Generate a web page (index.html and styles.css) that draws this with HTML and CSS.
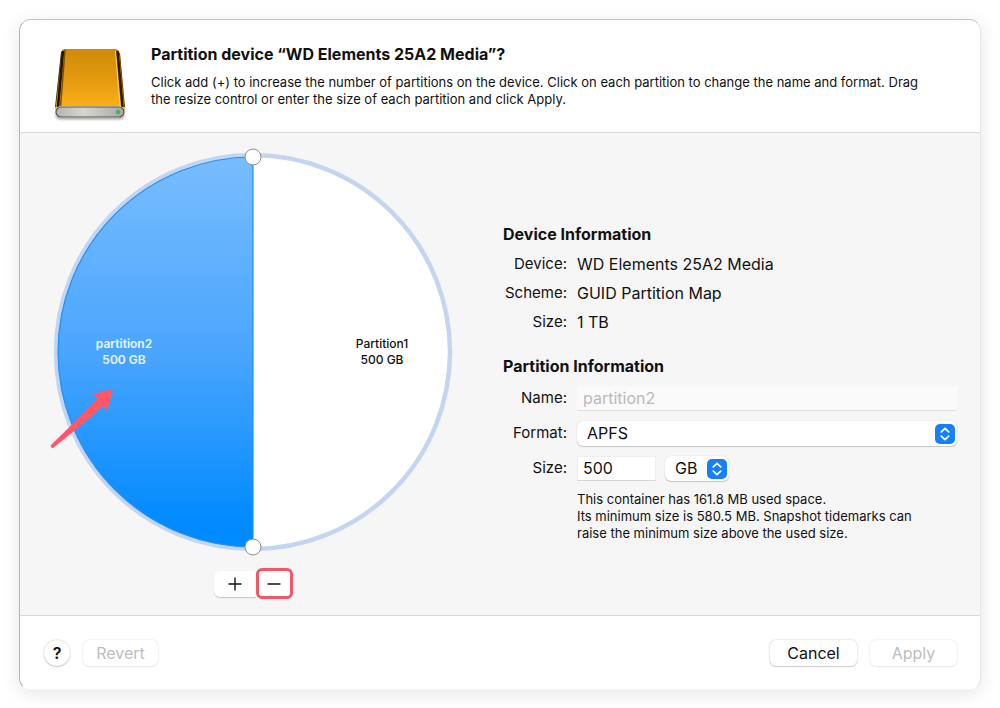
FILE: index.html
```html
<!DOCTYPE html>
<html lang="en">
<head>
<meta charset="utf-8">
<title>Partition device</title>
<link rel="stylesheet" href="styles.css">
</head>
<body>
<main class="dialog">
  <header class="header">
    <svg class="drive" viewBox="0 0 80 80" aria-hidden="true">
      <defs>
        <linearGradient id="case" x1="0" x2="0" y1="0" y2="1">
          <stop offset="0" stop-color="#cf8a08"/>
          <stop offset="0.5" stop-color="#e49a0e"/>
          <stop offset="1" stop-color="#fbb31a"/>
        </linearGradient>
        <linearGradient id="front" x1="0" x2="1" y1="0" y2="0">
          <stop offset="0" stop-color="#b5b3ae"/>
          <stop offset="0.4" stop-color="#d8d6d2"/>
          <stop offset="1" stop-color="#aaa8a4"/>
        </linearGradient>
        <filter id="soft" x="-20%" y="-100%" width="140%" height="300%"><feGaussianBlur stdDeviation="1.5"/></filter>
      </defs>
      <rect x="6" y="67" width="68" height="8" rx="4" fill="#000" opacity="0.45" filter="url(#soft)"/>
      <path d="M15 5h50q4 0 5 5l5 56H5l6-56q0-5 4-5z" fill="url(#case)"/>
      <path d="M11.500 8L5.500 63" stroke="#5c3b04" stroke-width="1" fill="none"/>
      <path d="M13 7L8 63" stroke="#211501" stroke-width="2.600" fill="none"/>
      <path d="M15 5.500L10.500 63" stroke="#7d4f04" stroke-width="1.500" fill="none"/>
      <path d="M65.500 7L70 63" stroke="#ffd257" stroke-width="1" fill="none"/>
      <path d="M67.500 7L72.500 63" stroke="#2a1a01" stroke-width="2.600" fill="none"/>
      <path d="M69.500 9L74.500 63" stroke="#6f4805" stroke-width="1" fill="none"/>
      <rect x="5" y="62" width="70" height="12" rx="6" fill="#efe6d2"/>
      <rect x="6" y="63" width="68" height="10" rx="5" fill="url(#front)" stroke="#55534f" stroke-width="1.2"/>
      <circle cx="68" cy="68" r="2.2" fill="#43b649"/>
    </svg>
    <div class="intro">
      <h1 class="title">Partition device “WD Elements 25A2 Media”?</h1>
      <p class="description">Click add (+) to increase the number of partitions on the device. Click on each partition to change the name and format. Drag the resize control or enter the size of each partition and click Apply.</p>
    </div>
  </header>

  <section class="content">
    <div class="map">
      <svg class="pie" viewBox="0 0 400 414" role="group" aria-label="Partition map">
        <defs>
          <linearGradient id="slice" x1="0" x2="0" y1="0" y2="1">
            <stop offset="0" stop-color="#78bdfd"/>
            <stop offset="0.5" stop-color="#4ba5fd"/>
            <stop offset="0.93" stop-color="#028bff"/>
            <stop offset="1" stop-color="#008aff"/>
          </linearGradient>
        </defs>
        <circle cx="200" cy="207" r="197" fill="#fff" stroke="#c4d5f1" stroke-width="4.5"/>
        <path d="M200 12a195 195 0 0 0 0 390z" fill="url(#slice)" stroke="#208ffb" stroke-width="1.2"/>
        <text class="pie-label pie-label-selected" x="71" y="203">partition2</text>
        <text class="pie-label pie-label-selected" x="71" y="219">500 GB</text>
        <text class="pie-label" x="329" y="203">Partition1</text>
        <text class="pie-label" x="329" y="219">500 GB</text>
        <g class="handles">
          <circle cx="200" cy="12" r="8"/>
          <circle cx="200" cy="402" r="8"/>
        </g>
        <path class="arrow" d="M60 244L39 249L45 253Q24 275-2 300Q-3 303 0 303Q28 281 50 261L54 266Z"/>
      </svg>
      <div class="segmented">
        <button class="segment" type="button" aria-label="Add partition">
          <svg class="glyph" viewBox="0 0 14 14"><path d="M1 7h12M7 1v12"/></svg>
        </button>
        <button class="segment segment-marked" type="button" aria-label="Remove partition">
          <svg class="glyph" viewBox="0 0 14 14"><path d="M1 7h12"/></svg>
        </button>
      </div>
    </div>

    <form class="info">
      <h2 class="heading">Device Information</h2>
      <dl class="facts">
        <dt>Device:</dt><dd>WD Elements 25A2 Media</dd>
        <dt>Scheme:</dt><dd>GUID Partition Map</dd>
        <dt>Size:</dt><dd>1 TB</dd>
      </dl>
      <h2 class="heading">Partition Information</h2>
      <div class="fields">
        <label for="name">Name:</label>
        <input class="field" id="name" type="text" value="partition2" disabled>
        <label for="format">Format:</label>
        <div class="popup">
          <select class="select" id="format"><option>APFS</option></select>
          <svg class="stepper" viewBox="0 0 20 20" aria-hidden="true"><rect width="20" height="20" rx="5"/><path d="M6.300 7.800L10 4.300l3.700 3.500M6.300 12.200L10 15.700l3.700-3.500"/></svg>
        </div>
        <label for="size">Size:</label>
        <div class="size-row">
          <input class="field field-size" id="size" type="text" value="500">
          <div class="popup popup-unit">
            <select class="select" aria-label="Size unit"><option>GB</option></select>
            <svg class="stepper" viewBox="0 0 20 20" aria-hidden="true"><rect width="20" height="20" rx="5"/><path d="M6.300 7.800L10 4.300l3.700 3.500M6.300 12.200L10 15.700l3.700-3.500"/></svg>
          </div>
        </div>
        <p class="note">This container has 161.8 MB used space.<br>Its minimum size is 580.5 MB. Snapshot tidemarks can raise the minimum size above the used size.</p>
      </div>
    </form>
  </section>

  <footer class="footer">
    <button class="help" type="button" aria-label="Help">?</button>
    <button class="button button-revert" type="button" disabled>Revert</button>
    <span class="spacer"></span>
    <button class="button" type="button">Cancel</button>
    <button class="button" type="button" disabled>Apply</button>
  </footer>
</main>
</body>
</html>
```

FILE: styles.css
```css
* {
  box-sizing: border-box;
}

body {
  margin: 0;
  padding: 19px;
  background: #fff;
  color: #111;
  font-family: Inter, "Liberation Sans", sans-serif;
  font-size: 16px;
  line-height: 20px;
}

h1, h2, p, dl, dd {
  margin: 0;
}

button, input, select {
  margin: 0;
  font: inherit;
  color: inherit;
}

.dialog {
  overflow: hidden;
  border: 1px solid #e6e6e6;
  border-top-color: #c4c4c4;
  border-left-color: #b4b4bc;
  border-bottom-color: #f4f4f4;
  border-radius: 12px;
  background: #fff;
  box-shadow: 0 4px 18px rgba(0, 0, 0, 0.1);
}

.header {
  display: flex;
  gap: 21px;
  padding: 24px 26px 8px 30px;
  border-bottom: 1px solid #d9d9d9;
}

.drive {
  flex: none;
  width: 80px;
  height: 80px;
}

.title {
  font-size: 16px;
  font-weight: 700;
  line-height: 20px;
}

.description {
  max-width: 780px;
  margin-top: 10px;
  font-size: 13px;
  line-height: 17px;
}

.content {
  display: flex;
  align-items: center;
  gap: 50px;
  padding: 12px 23px 16px 33px;
  background: #f6f6f6;
}

.map {
  display: flex;
  flex: 0 1 400px;
  flex-direction: column;
  align-items: center;
  gap: 9px;
}

.pie {
  display: block;
  width: 100%;
  overflow: visible;
}

.pie-label {
  font-size: 12px;
  font-weight: 500;
  text-anchor: middle;
  fill: #111;
}

.pie-label-selected {
  font-weight: 600;
  fill: #e9f6ff;
}

.handles {
  fill: #fff;
  stroke: #8d8d8d;
  stroke-width: 1;
}

.arrow {
  fill: #fd5768;
}

.segmented {
  display: flex;
  align-items: center;
}

.segment {
  display: grid;
  place-items: center;
  width: 42px;
  height: 26px;
  padding: 0;
  border: 0;
  border-radius: 6px 0 0 6px;
  background: #fff;
  box-shadow: 0 1px 1px rgba(0, 0, 0, 0.2);
}

.segment-marked {
  width: 37px;
  height: 31px;
  border: 3px solid #f65467;
  border-radius: 6px;
  box-shadow: none;
}

.glyph {
  width: 14px;
  height: 14px;
  fill: none;
  stroke: #111;
  stroke-width: 1.4;
  stroke-linecap: round;
}

.info {
  flex: 1;
  min-width: 0;
  margin-top: 21px;
}

.heading {
  font-size: 16px;
  font-weight: 700;
  line-height: 20px;
}

.facts, .fields {
  display: grid;
  grid-template-columns: 64px 1fr;
  column-gap: 10px;
  align-items: center;
}

.facts {
  row-gap: 9px;
  margin: 10px 0 24px;
}

.facts dt, .fields label {
  font-size: 15px;
  text-align: right;
}

.fields {
  row-gap: 10px;
  margin-top: 10px;
}

.field {
  width: 100%;
  height: 25px;
  padding: 0 5px;
  border: 1px solid #eee;
  border-bottom-color: #d5d5d5;
  background: #fff;
}

.field:disabled {
  border-color: #fafafa;
  border-bottom-color: #dedede;
  background: #fafafa;
  color: #b9b9b9;
}

.field-size {
  width: 79px;
}

.size-row {
  display: flex;
  gap: 9px;
}

.popup {
  position: relative;
}

.popup-unit {
  width: 64px;
}

.select {
  display: block;
  width: 100%;
  height: 25px;
  padding: 0 30px 0 10px;
  border: 0;
  border-radius: 6px;
  appearance: none;
  background: #fff;
  box-shadow: 0 0 1px rgba(0, 0, 0, 0.25), 0 1px 1px rgba(0, 0, 0, 0.18);
}

.stepper {
  position: absolute;
  top: 3px;
  right: 2px;
  width: 20px;
  height: 20px;
  fill: #1480fb;
  pointer-events: none;
}

.stepper path {
  fill: none;
  stroke: #fff;
  stroke-width: 1.8;
  stroke-linecap: round;
  stroke-linejoin: round;
}

.note {
  grid-column: 2;
  max-width: 360px;
  font-size: 13px;
  line-height: 17px;
}

.footer {
  display: flex;
  align-items: center;
  gap: 13px;
  padding: 24px 23px 23px 24px;
  border-top: 1px solid #d9d9d9;
}

.spacer {
  flex: 1;
}

.help, .button {
  height: 26px;
  padding: 0;
  border: 0;
  background: #fff;
  box-shadow: 0 0 2px rgba(0, 0, 0, 0.25), 0 1px 1px rgba(0, 0, 0, 0.15);
}

.help {
  width: 26px;
  border-radius: 50%;
  font-size: 16px;
  font-weight: 600;
}

.button {
  width: 87px;
  border-radius: 6px;
}

.button-revert {
  width: 75px;
}

.button:disabled {
  color: #bdbdbd;
  box-shadow: 0 0 2px rgba(0, 0, 0, 0.16), 0 1px 1px rgba(0, 0, 0, 0.05);
}
```
